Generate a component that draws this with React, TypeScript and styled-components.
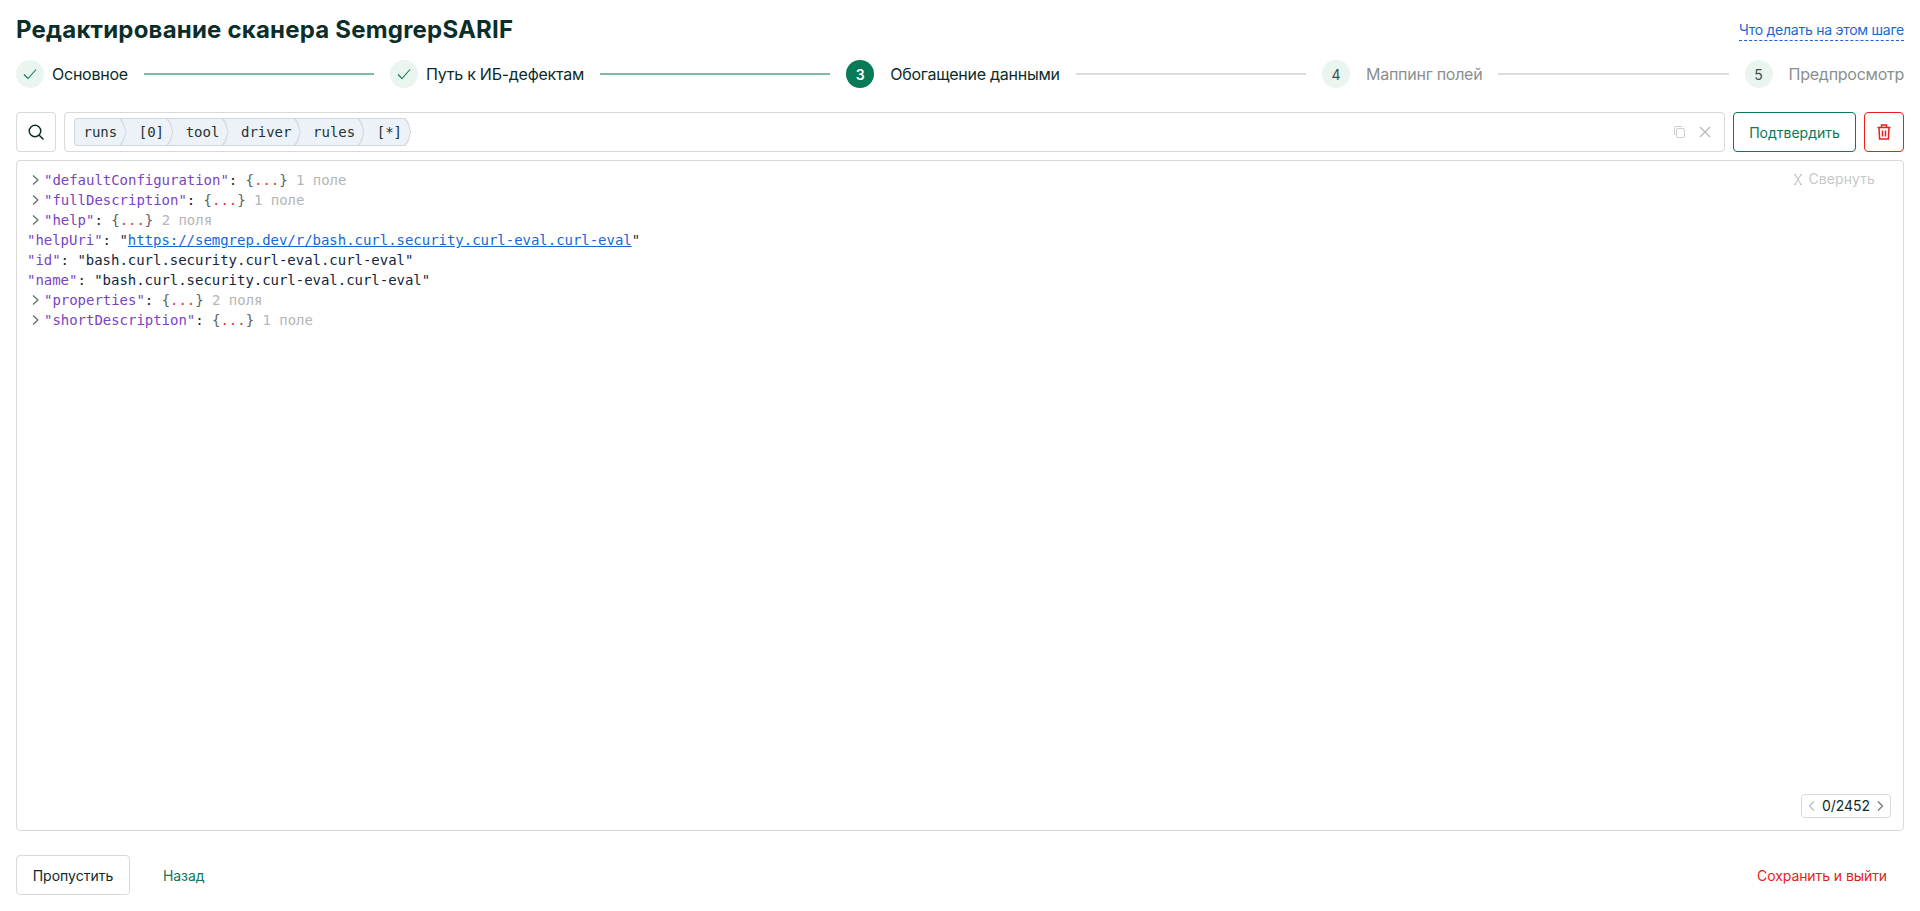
import React from "react";
import styled, { createGlobalStyle } from "styled-components";

const Global = createGlobalStyle`
  html, body { margin: 0; padding: 0; background: #fff; height: 100%; }
  body { font-family: "Inter", "Noto Sans", sans-serif; color: #0b2b26; overflow: hidden; }
`;

const Page = styled.div`
  height: 911px;
  box-sizing: border-box;
  padding: 0 16px;
  display: flex;
  flex-direction: column;
`;

const Header = styled.header`
  height: 60px;
  display: flex;
  align-items: center;
  justify-content: space-between;
`;

const Title = styled.h1`
  margin: 0;
  font-size: 24px;
  font-weight: 700;
  letter-spacing: 0.2px;
  line-height: 32px;
  color: #0a2e2a;
`;

const HelpLink = styled.a`
  font-size: 14px;
  line-height: 20px;
  letter-spacing: -0.25px;
  color: #1a66d6;
  border-bottom: 1px dashed #1a66d6;
`;

const Stepper = styled.div`
  height: 28px;
  display: flex;
  align-items: center;
  gap: 16px;
`;

const Step = styled.div<{ $done?: boolean }>`
  display: flex;
  align-items: center;
  gap: ${(p) => (p.$done ? "8px" : "16px")};
`;

const StepCircle = styled.div<{ $active?: boolean }>`
  width: 28px;
  height: 28px;
  border-radius: 50%;
  display: flex;
  align-items: center;
  justify-content: center;
  font-size: 14px;
  font-weight: ${(p) => (p.$active ? 600 : 400)};
  background: ${(p) => (p.$active ? "#087a58" : "#e9f5ee")};
  color: ${(p) => (p.$active ? "#fff" : "#3c4f4b")};
`;

const StepLabel = styled.span<{ $muted?: boolean }>`
  font-size: 16px;
  line-height: 24px;
  letter-spacing: -0.25px;
  color: ${(p) => (p.$muted ? "#8a8f8f" : "#0d2c28")};
  white-space: nowrap;
`;

const StepLine = styled.div<{ $done?: boolean }>`
  flex: 1;
  height: 2px;
  background: ${(p) => (p.$done ? "#80baa6" : "#dcdcdc")};
`;

const Toolbar = styled.div`
  margin-top: 24px;
  display: flex;
  align-items: stretch;
  height: 40px;
  gap: 8px;
`;

const SquareButton = styled.button<{ $danger?: boolean }>`
  width: 40px;
  height: 40px;
  padding: 0;
  box-sizing: border-box;
  background: #fff;
  border-radius: 4px;
  border: 1px solid ${(p) => (p.$danger ? "#e8201a" : "#d9d9d9")};
  color: ${(p) => (p.$danger ? "#e8201a" : "#0d2c28")};
  display: flex;
  align-items: center;
  justify-content: center;
`;

const PathField = styled.div`
  flex: 1;
  box-sizing: border-box;
  border: 1px solid #d9d9d9;
  border-radius: 4px;
  display: flex;
  align-items: center;
  padding: 0 12px 0 9px;
`;

const Crumbs = styled.div`
  flex: 1;
  display: flex;
  align-items: center;
`;

const chevronShape =
  "polygon(0 0, calc(100% - 6px) 0, calc(100% - 3px) 4px, 100% 50%, calc(100% - 3px) calc(100% - 4px), calc(100% - 6px) 100%, 0 100%)";

const Crumb = styled.span<{ $first?: boolean; $order: number }>`
  position: relative;
  z-index: ${(p) => p.$order};
  height: 28px;
  box-sizing: border-box;
  padding: 0 9.4px 0 ${(p) => (p.$first ? "9.5px" : "18.3px")};
  margin-left: ${(p) => (p.$first ? "0" : "-6px")};
  display: flex;
  align-items: center;
  font-family: "DejaVu Sans Mono", monospace;
  font-size: 14px;
  letter-spacing: -0.03px;
  color: #1d3532;
  background: #d4d9e0;
  border-radius: ${(p) => (p.$first ? "3px 0 0 3px" : "0")};
  clip-path: ${chevronShape};

  &::before {
    content: "";
    position: absolute;
    z-index: -1;
    top: 1px;
    bottom: 1px;
    right: 1px;
    left: ${(p) => (p.$first ? "1px" : "0")};
    background: #edf1f8;
    border-radius: ${(p) => (p.$first ? "2px 0 0 2px" : "0")};
    clip-path: ${chevronShape};
  }
`;

const FieldIcons = styled.div`
  display: flex;
  align-items: center;
  gap: 11px;
  color: #b4b8b8;
`;

const ConfirmButton = styled.button`
  width: 123px;
  background: #fff;
  border: 1px solid #087a58;
  border-radius: 4px;
  color: #087a58;
  font: 400 14px "Inter", sans-serif;
`;

const Panel = styled.section`
  position: relative;
  margin-top: 8px;
  height: 671px;
  box-sizing: border-box;
  border: 1px solid #d9d9d9;
  border-radius: 4px;
  padding: 9px 10px;
  font-family: "DejaVu Sans Mono", monospace;
  font-size: 14px;
  letter-spacing: -0.03px;
  line-height: 20px;
`;

const Row = styled.div`
  display: flex;
  align-items: center;
  height: 20px;
  white-space: pre;
  color: #13263a;
`;

const Chevron = styled.span`
  width: 12px;
  margin-left: 5px;
  display: flex;
  color: #5d6b6b;
`;

const Key = styled.span`
  color: #7a44c4;
`;

const Dots = styled.span`
  color: #dd3b35;
`;

const Brace = styled.span`
  color: #5c5f66;
`;

const Count = styled.span`
  color: #b5b5b5;
`;

const UrlLink = styled.a`
  color: #1a66d6;
  text-decoration: underline;
`;

const Collapse = styled.div`
  position: absolute;
  top: 8px;
  right: 28px;
  display: flex;
  align-items: center;
  gap: 5px;
  font-family: "Inter", sans-serif;
  font-size: 14px;
  letter-spacing: 0.1px;
  color: #c6c9c9;
`;

const Pager = styled.div`
  position: absolute;
  right: 12px;
  bottom: 12px;
  height: 24px;
  box-sizing: border-box;
  padding: 0 4px;
  border: 1px solid #d9d9d9;
  border-radius: 4px;
  display: flex;
  align-items: center;
  gap: 4px;
  font-family: "Inter", sans-serif;
  font-size: 14px;
  color: #0d2c28;
`;

const Footer = styled.footer`
  margin-top: 24px;
  display: flex;
  align-items: center;
  gap: 16px;
`;

const SkipButton = styled.button`
  width: 114px;
  height: 40px;
  background: #fff;
  border: 1px solid #d9d9d9;
  border-radius: 4px;
  color: #0d2c28;
  font: 400 14px "Inter", sans-serif;
`;

const TextButton = styled.button<{ $danger?: boolean }>`
  background: none;
  border: 0;
  padding: 0 17px;
  height: 40px;
  margin-left: ${(p) => (p.$danger ? "auto" : "0")};
  color: ${(p) => (p.$danger ? "#e8201a" : "#087a58")};
  font: 400 14px "Inter", sans-serif;
  letter-spacing: -0.08px;
`;

const Check = () => (
  <svg width="16" height="16" viewBox="0 0 16 16" fill="none" stroke="#087a58" strokeWidth="1.1">
    <path d="M2 8.5 6 12.5 14 3.5" />
  </svg>
);

const Arrow = () => (
  <Chevron>
    <svg width="8" height="12" viewBox="0 0 8 12" fill="none" stroke="currentColor" strokeWidth="1.2">
      <path d="M1 1.5 6 6 1 10.5" />
    </svg>
  </Chevron>
);

const steps = [
  { label: "Основное", done: true },
  { label: "Путь к ИБ-дефектам", done: true },
  { label: "Обогащение данными", active: true },
  { label: "Маппинг полей" },
  { label: "Предпросмотр" },
];

const crumbs = ["runs", "[0]", "tool", "driver", "rules", "[*]"];

const Collapsed = ({ name, count }: { name: string; count: string }) => (
  <Row>
    <Arrow />
    <Key>"{name}"</Key>
    {": "}
    <Brace>{"{"}</Brace>
    <Dots>...</Dots>
    <Brace>{"}"}</Brace>
    <Count>{" " + count}</Count>
  </Row>
);

export default function App() {
  return (
    <Page>
      <Global />
      <Header>
        <Title>Редактирование сканера SemgrepSARIF</Title>
        <HelpLink>Что делать на этом шаге</HelpLink>
      </Header>
      <Stepper>
        {steps.map((s, i) => (
          <React.Fragment key={s.label}>
            <Step $done={s.done}>
              <StepCircle $active={s.active}>{s.done ? <Check /> : i + 1}</StepCircle>
              <StepLabel $muted={!s.done && !s.active}>{s.label}</StepLabel>
            </Step>
            {i < steps.length - 1 && <StepLine $done={s.done} />}
          </React.Fragment>
        ))}
      </Stepper>
      <Toolbar>
        <SquareButton aria-label="Поиск">
          <svg width="18" height="18" viewBox="0 0 18 18" fill="none" stroke="currentColor" strokeWidth="1.5">
            <circle cx="8" cy="8" r="5.75" />
            <path d="M12 12 16.5 16.5" />
          </svg>
        </SquareButton>
        <PathField>
          <Crumbs>
            {crumbs.map((c, i) => (
              <Crumb key={c} $first={i === 0} $order={crumbs.length - i}>
                {c}
              </Crumb>
            ))}
          </Crumbs>
          <FieldIcons>
            <svg width="14" height="14" viewBox="0 0 14 14" fill="none" stroke="#cbcfcf">
              <rect x="3.5" y="3.5" width="8" height="9" rx="1.5" />
              <path d="M1.5 10V2.5a1 1 0 0 1 1-1H9" />
            </svg>
            <svg width="14" height="14" viewBox="0 0 14 14" fill="none" stroke="currentColor" strokeWidth="1.2">
              <path d="M2 2l10 10M12 2 2 12" />
            </svg>
          </FieldIcons>
        </PathField>
        <ConfirmButton>Подтвердить</ConfirmButton>
        <SquareButton $danger aria-label="Удалить">
          <svg width="14" height="16" viewBox="0 0 14 16" fill="none" stroke="currentColor" strokeWidth="1.5">
            <path d="M0.5 3.5h13M4.5 3.5V1h5v2.5M2 3.5l.6 11.5h8.8L12 3.5M5.5 6.5v6M8.5 6.5v6" />
          </svg>
        </SquareButton>
      </Toolbar>
      <Panel>
        <Collapsed name="defaultConfiguration" count="1 поле" />
        <Collapsed name="fullDescription" count="1 поле" />
        <Collapsed name="help" count="2 поля" />
        <Row>
          <Key>"helpUri"</Key>
          {': "'}
          <UrlLink>https://semgrep.dev/r/bash.curl.security.curl-eval.curl-eval</UrlLink>
          {'"'}
        </Row>
        <Row>
          <Key>"id"</Key>
          {': "bash.curl.security.curl-eval.curl-eval"'}
        </Row>
        <Row>
          <Key>"name"</Key>
          {': "bash.curl.security.curl-eval.curl-eval"'}
        </Row>
        <Collapsed name="properties" count="2 поля" />
        <Collapsed name="shortDescription" count="1 поле" />
        <Collapse>
          <svg width="10" height="11" viewBox="0 0 10 11" fill="none" stroke="currentColor" strokeWidth="1.1">
            <path d="M1 0.6h2M7 0.6h2M1 10.4h2M7 10.4h2M2 0.6l6 9.8M8 0.6 2 10.4" />
          </svg>
          Свернуть
        </Collapse>
        <Pager>
          <svg width="12" height="12" viewBox="0 0 12 12" fill="none" stroke="#b8bcbc" strokeWidth="1.2">
            <path d="M8 1.5 3.5 6 8 10.5" />
          </svg>
          0/2452
          <svg width="12" height="12" viewBox="0 0 12 12" fill="none" stroke="#6b7676" strokeWidth="1.2">
            <path d="M4 1.5 8.5 6 4 10.5" />
          </svg>
        </Pager>
      </Panel>
      <Footer>
        <SkipButton>Пропустить</SkipButton>
        <TextButton>Назад</TextButton>
        <TextButton $danger>Сохранить и выйти</TextButton>
      </Footer>
    </Page>
  );
}
